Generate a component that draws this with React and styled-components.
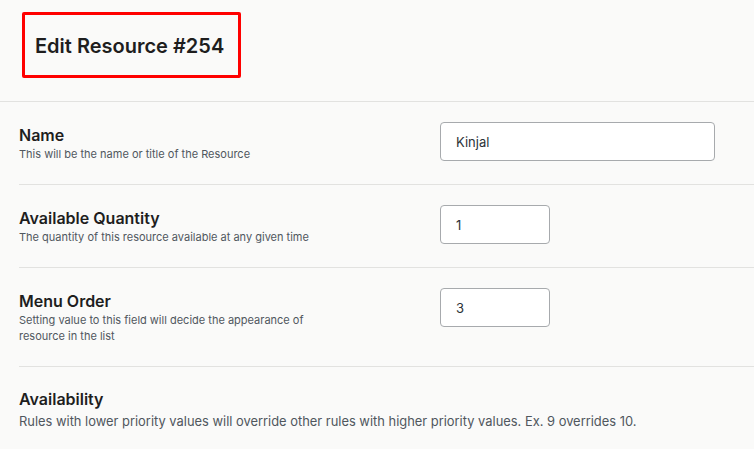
import React from "react";
import styled, { createGlobalStyle } from "styled-components";

const Global = createGlobalStyle`
  html, body { margin: 0; padding: 0; background: #fafaf9; }
  body { font-family: Inter, "Noto Sans", sans-serif; color: #1e1e1e; }
  * { box-sizing: border-box; }
`;

const Page = styled.div`
  width: 754px;
  min-height: 449px;
  background: #fafaf9;
  overflow: hidden;
`;

const Header = styled.header`
  height: 102px;
  border-bottom: 1px solid #e2e2e0;
  padding: 12px 0 0 22px;
`;

const TitleBox = styled.div`
  display: inline-flex;
  align-items: center;
  width: 219px;
  height: 66px;
  border: 3px solid #ff0000;
  border-radius: 2px;
  padding-left: 10px;
`;

const Title = styled.h1`
  margin: 2px 0 0;
  font-size: 20px;
  font-weight: 600;
  color: #1e1e1e;
`;

const Row = styled.div`
  margin-left: 19px;
  display: grid;
  grid-template-columns: 421px 1fr;
  align-items: start;
  padding: 20px 0 22px;
  border-bottom: 1px solid #e2e2e0;
`;

const Info = styled.div`
  display: flex;
  flex-direction: column;
  padding-top: 2px;
`;

const Label = styled.div`
  font-size: 16px;
  font-weight: 600;
  line-height: 22px;
  color: #1e1e1e;
`;

const Desc = styled.div`
  font-size: 11px;
  line-height: 16px;
  color: #50575e;
  max-width: ${(p) => p.$max || "400px"};
`;

const Input = styled.input`
  width: ${(p) => p.$w}px;
  height: 39px;
  border: 1px solid #a7aaad;
  border-radius: 4px;
  background: #fff;
  padding: 0 0 0 15px;
  font-family: Inter, "Noto Sans", sans-serif;
  font-size: 13px;
  color: #2c3338;
  outline: none;
`;

const Section = styled.div`
  padding: 21px 0 0 19px;
`;

const SectionDesc = styled.div`
  margin-top: 2px;
  font-size: 12.9px;
  line-height: 20px;
  color: #50575e;
`;

export default function App() {
  return (
    <Page>
      <Global />
      <Header>
        <TitleBox>
          <Title>Edit Resource #254</Title>
        </TitleBox>
      </Header>
      <Row>
        <Info>
          <Label>Name</Label>
          <Desc>This will be the name or title of the Resource</Desc>
        </Info>
        <Input $w={275} defaultValue="Kinjal" />
      </Row>
      <Row>
        <Info>
          <Label>Available Quantity</Label>
          <Desc>The quantity of this resource available at any given time</Desc>
        </Info>
        <Input $w={110} defaultValue="1" />
      </Row>
      <Row>
        <Info>
          <Label>Menu Order</Label>
          <Desc $max="300px">
            Setting value to this field will decide the appearance of resource in the list
          </Desc>
        </Info>
        <Input $w={110} defaultValue="3" />
      </Row>
      <Section>
        <Label>Availability</Label>
        <SectionDesc>
          Rules with lower priority values will override other rules with higher priority values. Ex. 9 overrides 10.
        </SectionDesc>
      </Section>
    </Page>
  );
}
